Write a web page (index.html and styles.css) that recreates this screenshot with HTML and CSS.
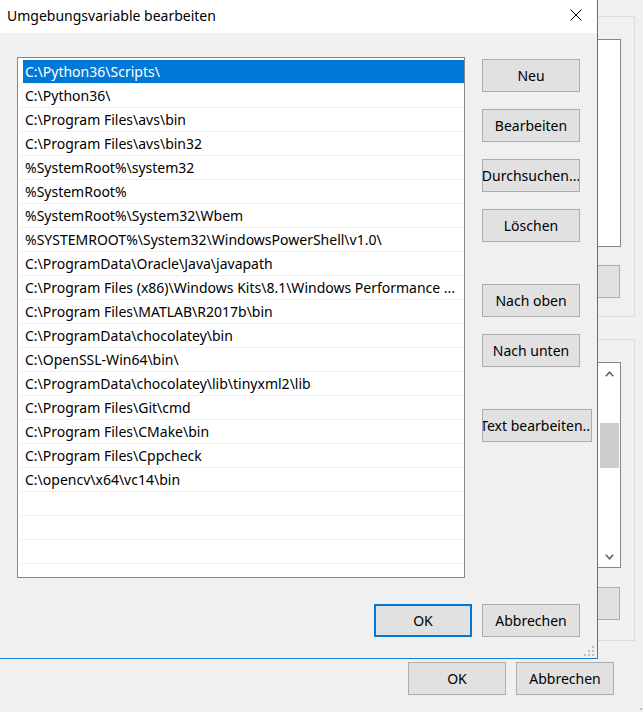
FILE: index.html
```html
<!DOCTYPE html>
<html lang="de">
<head>
<meta charset="utf-8">
<title>Umgebungsvariable bearbeiten</title>
<link rel="stylesheet" href="styles.css">
</head>
<body>
<div class="desktop">
  <div class="bg-window">
    <div class="bg-main">
      <div class="groupbox first">
        <div class="bg-list"></div>
        <div class="bg-btn-row"><button class="btn bg-btn"></button></div>
      </div>
      <div class="groupbox second">
        <div class="bg-list scroll">
          <div class="scrollbar">
            <div class="sb-arrow">
              <svg width="9" height="6" viewBox="0 0 9 6"><polyline points="0.8,5.2 4.5,1.2 8.2,5.2" fill="none" stroke="#606060" stroke-width="1.6"/></svg>
            </div>
            <div class="sb-track"><div class="sb-thumb"></div></div>
            <div class="sb-arrow">
              <svg width="9" height="6" viewBox="0 0 9 6"><polyline points="0.8,0.8 4.5,4.8 8.2,0.8" fill="none" stroke="#606060" stroke-width="1.6"/></svg>
            </div>
          </div>
        </div>
        <div class="bg-btn-row"><button class="btn bg-btn"></button></div>
      </div>
    </div>
    <div class="bg-footer">
      <button class="btn">OK</button>
      <button class="btn">Abbrechen</button>
    </div>
    <svg class="grip bg-grip" width="11" height="11" viewBox="0 0 11 11"><rect x="8" y="0" width="2" height="2"/><rect x="4" y="4" width="2" height="2"/><rect x="8" y="4" width="2" height="2"/><rect x="0" y="8" width="2" height="2"/><rect x="4" y="8" width="2" height="2"/><rect x="8" y="8" width="2" height="2"/></svg>
  </div>

  <div class="dialog">
    <div class="titlebar">
      <span class="title">Umgebungsvariable bearbeiten</span>
      <svg class="close" width="12" height="12" viewBox="0 0 12 12"><path d="M0.5 0.5 L11.5 11.5 M11.5 0.5 L0.5 11.5" stroke="#000" stroke-width="1" fill="none"/></svg>
    </div>
    <div class="dlg-body">
      <div class="dlg-main">
        <div class="pathlist">
          <div class="row selected"><div class="row-text">C:\Python36\Scripts\</div></div>
          <div class="row"><div class="row-text">C:\Python36\</div></div>
          <div class="row"><div class="row-text">C:\Program Files\avs\bin</div></div>
          <div class="row"><div class="row-text">C:\Program Files\avs\bin32</div></div>
          <div class="row"><div class="row-text">%SystemRoot%\system32</div></div>
          <div class="row"><div class="row-text">%SystemRoot%</div></div>
          <div class="row"><div class="row-text">%SystemRoot%\System32\Wbem</div></div>
          <div class="row"><div class="row-text">%SYSTEMROOT%\System32\WindowsPowerShell\v1.0\</div></div>
          <div class="row"><div class="row-text">C:\ProgramData\Oracle\Java\javapath</div></div>
          <div class="row"><div class="row-text">C:\Program Files (x86)\Windows Kits\8.1\Windows Performance ...</div></div>
          <div class="row"><div class="row-text">C:\Program Files\MATLAB\R2017b\bin</div></div>
          <div class="row"><div class="row-text">C:\ProgramData\chocolatey\bin</div></div>
          <div class="row"><div class="row-text">C:\OpenSSL-Win64\bin\</div></div>
          <div class="row"><div class="row-text">C:\ProgramData\chocolatey\lib\tinyxml2\lib</div></div>
          <div class="row"><div class="row-text">C:\Program Files\Git\cmd</div></div>
          <div class="row"><div class="row-text">C:\Program Files\CMake\bin</div></div>
          <div class="row"><div class="row-text">C:\Program Files\Cppcheck</div></div>
          <div class="row"><div class="row-text">C:\opencv\x64\vc14\bin</div></div>
          <div class="row"><div class="row-text"></div></div>
          <div class="row"><div class="row-text"></div></div>
          <div class="row"><div class="row-text"></div></div>
          <div class="row"><div class="row-text"></div></div>
        </div>
        <div class="dlg-buttons">
          <button class="btn">Neu</button>
          <button class="btn">Bearbeiten</button>
          <button class="btn">Durchsuchen...</button>
          <button class="btn">Löschen</button>
          <button class="btn group-start">Nach oben</button>
          <button class="btn">Nach unten</button>
          <button class="btn group-start wide">Text bearbeiten...</button>
        </div>
      </div>
      <div class="dlg-footer">
        <button class="btn default">OK</button>
        <button class="btn">Abbrechen</button>
      </div>
    </div>
    <svg class="grip dlg-grip" width="11" height="11" viewBox="0 0 11 11"><rect x="8" y="0" width="2" height="2"/><rect x="4" y="4" width="2" height="2"/><rect x="8" y="4" width="2" height="2"/><rect x="0" y="8" width="2" height="2"/><rect x="4" y="8" width="2" height="2"/><rect x="8" y="8" width="2" height="2"/></svg>
  </div>
</div>
</body>
</html>
```

FILE: styles.css
```css
* { box-sizing: border-box; }

html, body {
  margin: 0;
  padding: 0;
}

body {
  width: 643px;
  height: 712px;
  overflow: hidden;
  background: #f0f0f0;
  font-family: "Noto Sans", "Open Sans", sans-serif;
  font-size: 14px;
  color: #000;
}

.desktop {
  position: relative;
  width: 643px;
  height: 712px;
}

/* ---------- background window ---------- */
.bg-window {
  position: relative;
  width: 643px;
  height: 712px;
  display: flex;
  flex-direction: column;
}

.bg-main {
  display: flex;
  flex-direction: column;
  gap: 22px;
  padding: 16px 8px 0 520px;
}

.groupbox {
  border: 1px solid #dcdcdc;
  padding: 22px 13px 0 20px;
  display: flex;
  flex-direction: column;
}

.groupbox.first { height: 301px; }
.groupbox.second { height: 302px; }

.bg-list {
  background: #fff;
  border: 1px solid #828790;
  height: 208px;
}

.bg-list.scroll {
  height: 206px;
  display: flex;
  justify-content: flex-end;
}

.scrollbar {
  width: 21px;
  display: flex;
  flex-direction: column;
  background: #fff;
}

.sb-arrow {
  height: 21px;
  display: flex;
  align-items: center;
  justify-content: center;
}

.sb-track {
  flex: 1;
  padding: 39px 1px 0 1px;
}

.sb-thumb {
  height: 45px;
  background: #cdcdcd;
}

.bg-btn-row {
  display: flex;
  justify-content: flex-end;
  padding-right: 1px;
}

.groupbox.first .bg-btn-row { margin-top: 18px; }
.groupbox.second .bg-btn-row { margin-top: 19px; }

.bg-footer {
  display: flex;
  justify-content: flex-end;
  gap: 10px;
  padding: 21px 29px 0 0;
}

.grip { fill: #bdbdbd; }

.bg-grip {
  position: absolute;
  right: -4px;
  bottom: -3px;
}

/* ---------- buttons ---------- */
.btn {
  width: 98px;
  height: 33px;
  padding: 0;
  margin: 0;
  background: #e1e1e1;
  border: 1px solid #adadad;
  border-radius: 0;
  font-family: inherit;
  font-size: 14px;
  color: #000;
  text-align: center;
  white-space: nowrap;
  overflow: hidden;
  display: flex;
  align-items: center;
  justify-content: center;
}

.btn.default {
  border: 2px solid #0078d7;
}

.btn.wide {
  width: 110px;
}

/* ---------- dialog ---------- */
.dialog {
  position: absolute;
  left: -1px;
  top: -1px;
  width: 599px;
  height: 660px;
  border: 1px solid #1883d7;
  background: #f0f0f0;
  display: flex;
  flex-direction: column;
}

.titlebar {
  height: 33px;
  flex: none;
  background: #fff;
  display: flex;
  align-items: center;
  justify-content: space-between;
  padding: 0 15px 0 7px;
}

.title {
  font-size: 14px;
  color: #000;
  margin-bottom: 3px;
}

.close {
  margin-bottom: 4px;
}

.dlg-body {
  flex: 1;
  padding: 24px 17px 0 17px;
  display: flex;
  flex-direction: column;
}

.dlg-main {
  display: flex;
  gap: 17px;
}

.pathlist {
  width: 448px;
  height: 521px;
  flex: none;
  border: 1px solid #828790;
  background: #fff;
  padding: 2px 0 0 1px;
  overflow: hidden;
}

.row {
  height: 24px;
  border-bottom: 1px solid #f0f0f0;
  padding-left: 4px;
}

.row-text {
  height: 23px;
  line-height: 23px;
  padding-left: 2px;
  white-space: nowrap;
  overflow: hidden;
}

.row.selected .row-text {
  background: #0078d7;
  color: #fff;
}

.dlg-buttons {
  display: flex;
  flex-direction: column;
  gap: 17px;
  padding-top: 2px;
}

.dlg-buttons .group-start {
  margin-top: 25px;
}

.dlg-footer {
  display: flex;
  justify-content: flex-end;
  gap: 10px;
  margin-top: 26px;
}

.dlg-grip {
  position: absolute;
  right: 2px;
  bottom: 1px;
}
```
